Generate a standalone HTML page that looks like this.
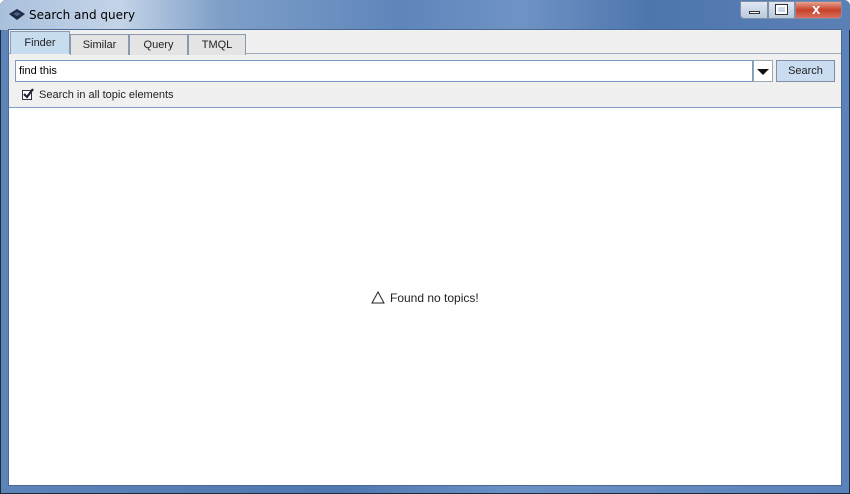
<!DOCTYPE html>
<html><head><style>
*{margin:0;padding:0;box-sizing:border-box}
body{width:850px;height:494px;background:#fff;font-family:"Liberation Sans",sans-serif;position:relative;overflow:hidden}
.frame{position:absolute;left:0;top:0;width:850px;height:494px;border:1px solid #1e2a3a;border-radius:6px 6px 0 0;background:linear-gradient(90deg,#5d84b8,#4f78b0 40%,#6a90c4 60%,#5b82ba)}
.title{position:absolute;left:0;top:0;width:850px;height:30px;background:linear-gradient(90deg,#a9c0dc 0,#c4d4e8 120px,#7f9fc8 220px,#5e86bb 400px,#6f93c4 520px,#4d76ae 650px,#5b80b6 850px);border-radius:6px 6px 0 0}
.ttext{position:absolute;left:29px;top:8px;font-size:12px;color:#000;font-family:"DejaVu Sans",sans-serif}
.inner{position:absolute;left:8px;top:29px;width:834px;height:457px;background:#f0f0f0;border:1px solid #4b6a93}
.tab{position:absolute;top:3px;height:21px;font-size:11px;text-align:center;line-height:20px;border:1px solid #8a9aae;border-bottom:none;background:#e4e4e4;color:#222}
.white{position:absolute;left:0;top:77px;width:832px;height:378px;background:#fff;border-top:1px solid #7e9cc4}
.btn{position:absolute;border:1px solid #7f90a6}
</style></head><body>
<div class="frame"></div>
<div class="title"></div>
<svg style="position:absolute;left:8px;top:8px" width="18" height="14"><path d="M1 6 L9 1 L17 6 L9 12 Z" fill="#1e2a40"/><path d="M5 6 L9 4 L13 6 L9 8Z" fill="#4a6088"/></svg>
<div class="ttext">Search and query</div>
<div class="btn" style="left:740px;top:1px;width:28px;height:18px;background:linear-gradient(#dfe7f2,#b9c9de);border-radius:0 0 0 4px"></div>
<div style="position:absolute;left:749px;top:11px;width:11px;height:3px;background:#fff;border:1px solid #333"></div>
<div class="btn" style="left:768px;top:1px;width:27px;height:18px;background:linear-gradient(#dfe7f2,#b9c9de)"></div>
<div style="position:absolute;left:776px;top:5px;width:11px;height:9px;border:2px solid #fff;outline:1px solid #333"></div>
<div class="btn" style="left:795px;top:1px;width:47px;height:18px;background:linear-gradient(#e8a090,#c8412a 50%,#d87060);border-radius:0 0 4px 0"></div>
<div style="position:absolute;left:812px;top:1px;font-size:15px;font-weight:bold;color:#fff">x</div>
<div class="inner">
 <div style="position:absolute;left:0;top:23px;width:832px;height:1px;background:#9aaabd"></div>
 <div class="tab" style="left:1px;top:1px;width:60px;height:23px;background:#c8dcf0;line-height:22px">Finder</div>
 <div class="tab" style="left:61px;width:59px;top:4px">Similar</div>
 <div class="tab" style="left:120px;width:59px;top:4px">Query</div>
 <div class="tab" style="left:179px;width:58px;top:4px">TMQL</div>
 <div style="position:absolute;left:6px;top:30px;width:738px;height:22px;background:#fff;border:1px solid #7a9cc4;font-size:11px;padding:4px 3px;color:#000">find this</div>
 <div style="position:absolute;left:744px;top:30px;width:20px;height:22px;background:#fff;border:1px solid #9aa"></div>
 <div style="position:absolute;left:748px;top:39px;width:0;height:0;border-left:6px solid transparent;border-right:6px solid transparent;border-top:6px solid #111"></div>
 <div style="position:absolute;left:767px;top:30px;width:59px;height:22px;background:#cadcf0;border:1px solid #7f8fa6;font-size:11px;text-align:center;line-height:20px;color:#222">Search</div>
 <svg style="position:absolute;left:13px;top:58px" width="12" height="12"><rect x="0.5" y="2.5" width="9" height="9" fill="#fff" stroke="#334"/><path d="M2 6 L5 9 L11 1" stroke="#223" stroke-width="2.2" fill="none"/></svg>
 <div style="position:absolute;left:30px;top:59px;font-size:11px;color:#222">Search in all topic elements</div>
 <div class="white">
  <svg style="position:absolute;left:362px;top:183px" width="14" height="13"><path d="M7 1 L13 12 L1 12 Z" fill="none" stroke="#222"/></svg>
  <div style="position:absolute;left:381px;top:183px;font-size:12px;color:#222">Found no topics!</div>
 </div>
</div>
</body></html>
